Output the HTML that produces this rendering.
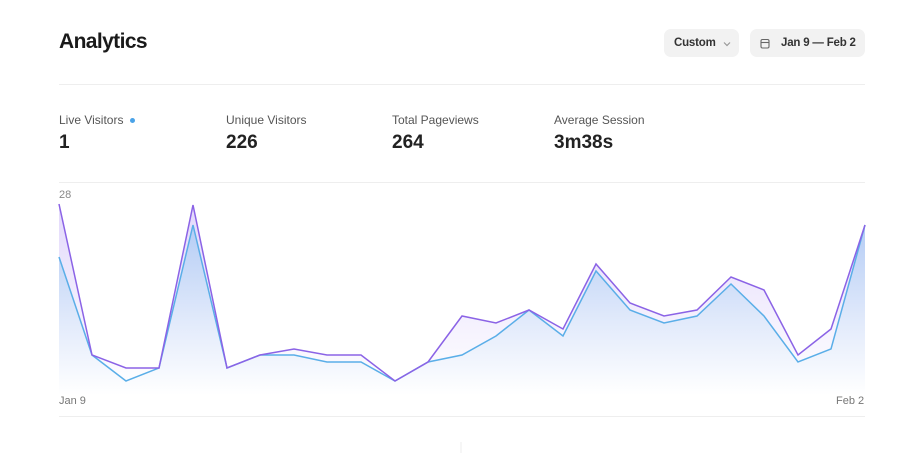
<!DOCTYPE html>
<html><head><style>
body{margin:0;width:900px;height:453px;background:#fff;font-family:"Liberation Sans",sans-serif;overflow:hidden;position:relative;color:#1a1a1a}
.a{position:absolute}
.btn{position:absolute;top:29px;height:28px;background:#f2f2f2;border-radius:7px;font-size:11.5px;font-weight:bold;color:#333;line-height:28px;white-space:nowrap;letter-spacing:-0.2px}
.lbl{position:absolute;top:113px;font-size:12px;color:#555}
.val{position:absolute;top:132px;font-size:19px;font-weight:bold;color:#222}
.hr{position:absolute;left:59px;width:806px;height:1px;background:#eee}
</style></head><body>
<div class="a" style="left:59px;top:30px;font-size:21px;font-weight:bold;color:#1a1a1a;letter-spacing:-0.6px">Analytics</div>
<div class="btn" style="left:664px;width:75px"><span style="margin-left:10px">Custom</span><svg class="a" style="left:59px;top:12px" width="8" height="6" viewBox="0 0 8 6"><path d="M1 1.5L4 4.5L7 1.5" stroke="#999" stroke-width="1.2" fill="none"/></svg></div>
<div class="btn" style="left:750px;width:115px"><svg class="a" style="left:10px;top:9px" width="10" height="11" viewBox="0 0 10 11"><rect x="1" y="1.5" width="8" height="8.5" rx="1.5" stroke="#666" stroke-width="1.1" fill="none"/><path d="M1 4.5H9" stroke="#666" stroke-width="1.1"/></svg><span style="margin-left:31px">Jan 9 — Feb 2</span></div>
<div class="hr" style="top:84px"></div>
<div class="lbl" style="left:59px">Live Visitors <span style="display:inline-block;width:5px;height:5px;border-radius:50%;background:#4aa3e8;vertical-align:middle;margin-left:3px"></span></div>
<div class="lbl" style="left:226px">Unique Visitors</div>
<div class="lbl" style="left:392px">Total Pageviews</div>
<div class="lbl" style="left:554px">Average Session</div>
<div class="val" style="left:59px">1</div>
<div class="val" style="left:226px">226</div>
<div class="val" style="left:392px">264</div>
<div class="val" style="left:554px">3m38s</div>
<div class="hr" style="top:182px"></div>
<div class="a" style="left:59px;top:189px;font-size:11px;color:#888">28</div>
<svg class="a" style="left:0;top:0" width="900" height="453">
<defs>
<linearGradient id="gp" x1="0" y1="200" x2="0" y2="390" gradientUnits="userSpaceOnUse"><stop offset="0" stop-color="#e2d8fb"/><stop offset="1" stop-color="#fff"/></linearGradient>
<linearGradient id="gb" x1="0" y1="220" x2="0" y2="395" gradientUnits="userSpaceOnUse"><stop offset="0" stop-color="#b2cbf5"/><stop offset="0.6" stop-color="#e3ebfb"/><stop offset="1" stop-color="#fff"/></linearGradient>
</defs>
<path fill="url(#gp)" d="M59,204 L92,355 L126,368 L159,368 L193,205 L227,368 L260,355 L294,349 L327,355 L361,355 L395,381 L428,362 L462,316 L496,323 L529,310 L563,329 L596,264 L630,303 L664,316 L697,310 L731,277 L764,290 L798,355 L831,329 L865,225 L865,395 L59,395Z"/>
<path fill="url(#gb)" d="M59,257 L92,355 L126,381 L159,368 L193,225 L227,368 L260,355 L294,355 L327,362 L361,362 L395,381 L428,362 L462,355 L496,336 L529,310 L563,336 L596,271 L630,310 L664,323 L697,316 L731,284 L764,316 L798,362 L831,349 L865,225 L865,395 L59,395Z"/>
<path fill="none" stroke="#5aaee8" stroke-width="1.5" d="M59,257 L92,355 L126,381 L159,368 L193,225 L227,368 L260,355 L294,355 L327,362 L361,362 L395,381 L428,362 L462,355 L496,336 L529,310 L563,336 L596,271 L630,310 L664,323 L697,316 L731,284 L764,316 L798,362 L831,349 L865,225"/>
<path fill="none" stroke="#8b63e6" stroke-width="1.5" d="M59,204 L92,355 L126,368 L159,368 L193,205 L227,368 L260,355 L294,349 L327,355 L361,355 L395,381 L428,362 L462,316 L496,323 L529,310 L563,329 L596,264 L630,303 L664,316 L697,310 L731,277 L764,290 L798,355 L831,329 L865,225"/>
<path d="M461,442V453" stroke="#eee"/>
</svg>
<div class="a" style="left:59px;top:395px;font-size:11px;color:#777">Jan 9</div>
<div class="a" style="left:836px;top:395px;font-size:11px;color:#777">Feb 2</div>
<div class="hr" style="top:416px"></div>
</body></html>
